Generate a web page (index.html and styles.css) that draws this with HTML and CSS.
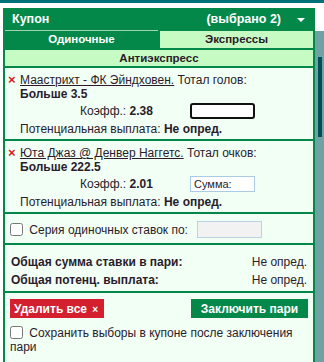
FILE: index.html
```html
<!DOCTYPE html>
<html lang="ru">
<head>
  <meta charset="UTF-8" />
  <meta name="viewport" content="width=device-width, initial-scale=1.0" />
  <title>Купон</title>
  <link rel="stylesheet" href="styles.css">
</head>
<body>
  <div class="topbar"></div>
  <div class="page">
    <div class="coupon">
      <div class="coupon-head">
        <span class="coupon-title">Купон</span>
        <span class="coupon-count">(выбрано 2)</span>
        <span class="coupon-toggle"></span>
      </div>
      <div class="tabs">
        <div class="tab active">Одиночные</div>
        <div class="tab">Экспрессы</div>
      </div>
      <div class="tab tab-wide">Антиэкспресс</div>

      <div class="section bet">
        <div class="bet-line"><span class="bet-remove">×</span><a href="#">Маастрихт - ФК Эйндховен.</a> Тотал голов:</div>
        <div class="bet-line bet-pick">Больше 3.5</div>
        <div class="bet-odds">
          <span class="odds">Коэфф.: <b>2.38</b></span>
          <input type="text" class="stake stake-focus" />
        </div>
        <div class="bet-line">Потенциальная выплата: <b>Не опред.</b></div>
      </div>

      <div class="section bet">
        <div class="bet-line"><span class="bet-remove">×</span><a href="#">Юта Джаз @ Денвер Наггетс.</a> Тотал очков:</div>
        <div class="bet-line bet-pick">Больше 222.5</div>
        <div class="bet-odds">
          <span class="odds">Коэфф.: <b>2.01</b></span>
          <input type="text" class="stake" placeholder="Сумма:" />
        </div>
        <div class="bet-line">Потенциальная выплата: <b>Не опред.</b></div>
      </div>

      <div class="section series">
        <label class="check"><input type="checkbox" /> Серия одиночных ставок по:</label>
        <input type="text" class="series-input" />
      </div>

      <div class="section totals">
        <div class="total-row"><b>Общая сумма ставки в пари:</b><span>Не опред.</span></div>
        <div class="total-row"><b>Общая потенц. выплата:</b><span>Не опред.</span></div>
      </div>

      <div class="section actions">
        <div class="buttons">
          <button class="btn btn-delete">Удалить все <span class="btn-x">×</span></button>
          <button class="btn btn-place">Заключить пари</button>
        </div>
        <label class="keep"><input type="checkbox" /> Сохранить выборы в купоне после заключения пари</label>
      </div>
    </div>
    <div class="scroll-track">
      <div class="scroll-thumb"></div>
    </div>
  </div>
</body>
</html>
```

FILE: styles.css
```css
:root {
  --verde: #04884a;
  --verde-claro: #c6fbc3;
  --fundo: #f1fff5;
  --texto: #2b1b2b;
  --vermelho: #d4202e;
}
body {
  margin: 0;
  font-family: 'Liberation Sans', Arial, sans-serif;
  font-size: 12px;
  color: var(--texto);
  background: white;
}
.topbar {
  height: 3px;
  background: #00707a;
}
.page {
  display: flex;
  align-items: flex-start;
}
.coupon {
  width: 308px;
  margin: 5px 0 0 3px;
  padding: 0 2px;
  background: var(--verde);
  display: flex;
  flex-direction: column;
}
.coupon-head {
  height: 22px;
  display: flex;
  align-items: center;
  padding: 0 8px 0 7px;
  color: white;
  font-weight: bold;
  font-size: 12.5px;
}
.coupon-title {
  flex: 1;
}
.coupon-toggle {
  margin-left: 16px;
  width: 0;
  height: 0;
  border-left: 4px solid transparent;
  border-right: 4px solid transparent;
  border-top: 4px solid white;
  margin-top: 2px;
}
.tabs {
  display: grid;
  grid-template-columns: 1fr 1fr;
  gap: 2px;
  align-items: end;
}
.tab {
  height: 17px;
  line-height: 17px;
  text-align: center;
  font-weight: bold;
  font-size: 11.5px;
  background: var(--verde-claro);
  color: var(--texto);
}
.tab.active {
  background: var(--verde);
  color: white;
  border-top: 1px solid #9fd3b4;
}
.tab-wide {
  height: 16px;
  line-height: 16px;
  margin-top: 2px;
}
.section {
  background: var(--fundo);
  margin-top: 2px;
}
.bet {
  padding: 5px 6px 3px 15px;
}
.bet-line {
  line-height: 14px;
  position: relative;
}
.bet-remove {
  position: absolute;
  left: -12px;
  top: 0;
  color: #d41c20;
  font-weight: bold;
  font-size: 13px;
}
.bet-line a {
  color: var(--texto);
}
.bet-pick {
  font-weight: bold;
}
.bet-odds {
  display: flex;
  align-items: center;
  height: 16px;
  margin: 2px 0 3px 60px;
}
.odds {
  width: 110px;
}
.stake {
  box-sizing: border-box;
  width: 65px;
  height: 16px;
  border: 1px solid #a9cbe6;
  background: white;
  padding: 0 3px;
  font-family: inherit;
  font-size: 11px;
  color: var(--texto);
}
.stake::placeholder {
  color: var(--texto);
}
.stake-focus {
  border: 2px solid #111;
  border-radius: 3px;
}
.series {
  display: flex;
  align-items: center;
  padding: 7px 0 5px 5px;
}
.check, .keep {
  color: var(--texto);
}
input[type="checkbox"] {
  width: 13px;
  height: 13px;
  margin: 0 3px 0 0;
  vertical-align: -2px;
}
.series-input {
  box-sizing: border-box;
  width: 65px;
  height: 17px;
  margin-left: 9px;
  border: 1px solid #b9d3e4;
  background: #f2f2f2;
}
.totals {
  padding: 8px 6px 2px 6px;
}
.total-row {
  display: flex;
  justify-content: space-between;
  line-height: 18px;
}
.actions {
  padding: 6px 5px 20px 5px;
}
.buttons {
  display: flex;
  justify-content: space-between;
}
.btn {
  height: 19px;
  border: none;
  color: white;
  font-family: inherit;
  font-weight: bold;
  font-size: 12px;
  padding: 0 8px;
}
.btn-delete {
  background: var(--vermelho);
  padding: 0 6px 0 4px;
}
.btn-x {
  font-size: 10px;
  margin-left: 2px;
}
.btn-place {
  background: var(--verde);
  width: 117px;
}
.keep {
  display: block;
  margin-top: 8px;
  line-height: 14px;
}
.scroll-track {
  flex: 1;
  margin-top: 28px;
  height: 331px;
  background: #6ea2a4;
  padding-left: 3px;
}
.scroll-thumb {
  width: 4px;
  height: 80px;
  margin-top: 26px;
  background: #00505b;
}
```
